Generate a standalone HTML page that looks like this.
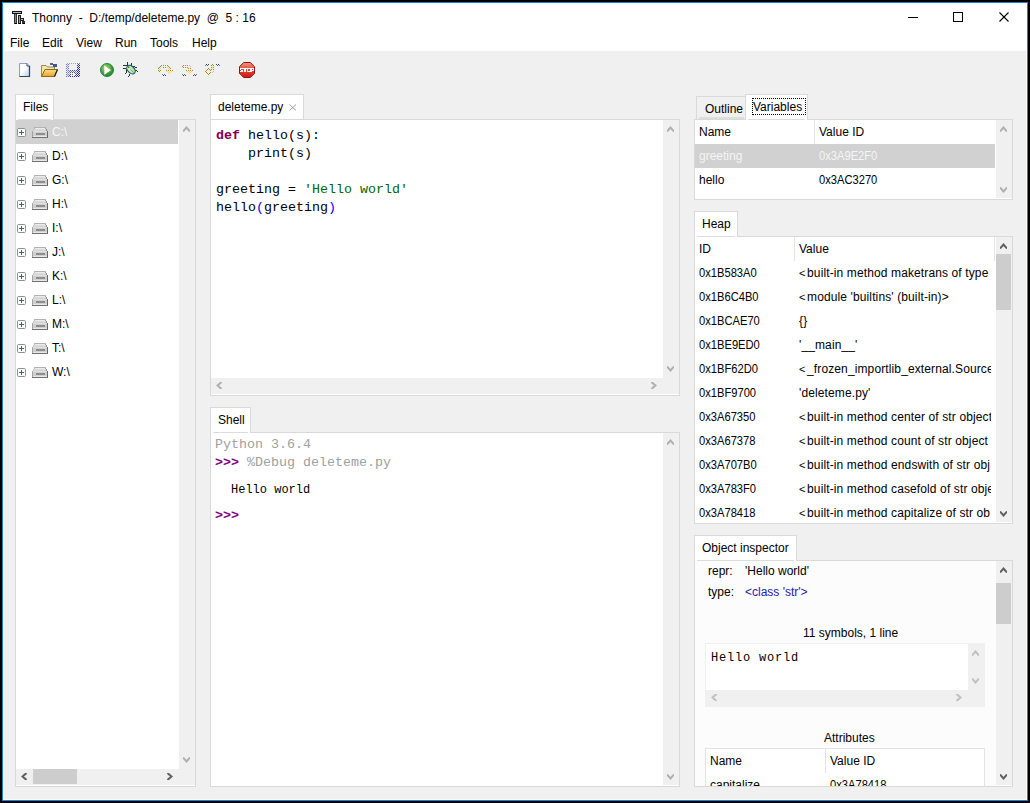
<!DOCTYPE html>
<html><head><meta charset="utf-8">
<style>
html,body{margin:0;padding:0;}
body{width:1030px;height:803px;background:#000;position:relative;overflow:hidden;font-family:"Liberation Sans",sans-serif;}
.a{position:absolute;box-sizing:border-box;display:block;}
.t{position:absolute;white-space:pre;font-size:12px;line-height:16px;color:#000;transform-origin:0 0;}
.m{position:absolute;white-space:pre;font-family:"Liberation Mono",monospace;font-size:13.33px;line-height:18px;color:#000;}
.c{position:absolute;white-space:pre;font-family:"Liberation Mono",monospace;font-size:12px;line-height:16px;color:#000;}
</style></head><body>

<div class="a" style="left:2px;top:2px;width:1026px;height:799px;border:1px solid #1883d7;background:#fcf9f6;"></div>
<div class="a" style="left:3px;top:3px;width:1024px;height:48px;background:#fff;"></div>
<div class="a" style="left:4px;top:51px;width:1022px;height:748px;background:#f0f0f0;"></div>
<div class="t" style="left:32px;top:10px;">Thonny  -  D:/temp/deleteme.py  @  5 : 16</div>
<div class="a" style="left:908px;top:17px;width:10px;height:1px;background:#000;"></div>
<div class="a" style="left:953px;top:12px;width:10px;height:10px;border:1px solid #000;background:transparent;"></div>
<svg class="a" style="left:998px;top:11px" width="12" height="12"><path d="M1.5 1.5 L10.5 10.5 M10.5 1.5 L1.5 10.5" stroke="#000" stroke-width="1.1"/></svg>
<div class="t" style="left:10px;top:35px;">File</div>
<div class="t" style="left:42px;top:35px;">Edit</div>
<div class="t" style="left:76px;top:35px;">View</div>
<div class="t" style="left:115px;top:35px;">Run</div>
<div class="t" style="left:150px;top:35px;">Tools</div>
<div class="t" style="left:192px;top:35px;">Help</div>
<div class="a" style="left:15px;top:94px;width:39px;height:26px;border:1px solid #d9d9d9;background:#fff;"></div>
<div class="t" style="left:23px;top:99px;">Files</div>
<div class="a" style="left:15px;top:119px;width:181px;height:668px;border:1px solid #d9d9d9;background:#fff;"></div>
<div class="a" style="left:16px;top:120px;width:37px;height:1px;background:#fff;"></div>
<div class="a" style="left:16px;top:120px;width:162px;height:24px;background:#d1d1d1;"></div>
<div class="a" style="left:16px;top:119px;width:2px;height:1px;background:#fff;"></div>
<div class="a" style="left:18px;top:119px;width:33px;height:1px;background:#dcdcdc;"></div>
<div class="a" style="left:51px;top:119px;width:2px;height:1px;background:#fff;"></div>
<svg class="a" style="left:17px;top:128px" width="9" height="9"><rect x="0.5" y="0.5" width="8" height="8" rx="1" fill="#fff" stroke="#8e8f8f"/><path d="M2 4.5H7M4.5 2V7" stroke="#3e5c9a" stroke-width="1"/></svg>
<svg class="a" style="left:32px;top:127px" width="16" height="11"><g shape-rendering="crispEdges"><rect x="2" y="0" width="12" height="1" fill="#b4b4b4"/><rect x="2" y="1" width="1" height="1" fill="#b4b4b4"/><rect x="3" y="1" width="10" height="1" fill="#ececec"/><rect x="13" y="1" width="1" height="1" fill="#a0a0a0"/><rect x="1" y="2" width="1" height="1" fill="#c0c0c0"/><rect x="2" y="2" width="12" height="1" fill="#dcdcdc"/><rect x="14" y="2" width="1" height="1" fill="#909090"/><rect x="1" y="3" width="1" height="1" fill="#c8c8c8"/><rect x="2" y="3" width="12" height="1" fill="#d4d4d4"/><rect x="14" y="3" width="1" height="1" fill="#888888"/><rect x="0" y="4" width="1" height="1" fill="#a8a8a8"/><rect x="1" y="4" width="14" height="1" fill="#e0e0e0"/><rect x="15" y="4" width="1" height="1" fill="#707070"/><rect x="0" y="5" width="1" height="1" fill="#a0a0a0"/><rect x="1" y="5" width="14" height="1" fill="#d0d0d0"/><rect x="15" y="5" width="1" height="1" fill="#686868"/><rect x="0" y="6" width="1" height="1" fill="#a0a0a0"/><rect x="1" y="6" width="3" height="1" fill="#d0d0d0"/><rect x="4" y="6" width="9" height="1" fill="#8e8e8e"/><rect x="13" y="6" width="2" height="1" fill="#d0d0d0"/><rect x="15" y="6" width="1" height="1" fill="#686868"/><rect x="0" y="7" width="1" height="1" fill="#a0a0a0"/><rect x="1" y="7" width="3" height="1" fill="#d0d0d0"/><rect x="4" y="7" width="9" height="1" fill="#8e8e8e"/><rect x="13" y="7" width="2" height="1" fill="#d0d0d0"/><rect x="15" y="7" width="1" height="1" fill="#686868"/><rect x="0" y="8" width="1" height="1" fill="#a0a0a0"/><rect x="1" y="8" width="14" height="1" fill="#d0d0d0"/><rect x="15" y="8" width="1" height="1" fill="#686868"/><rect x="0" y="9" width="1" height="1" fill="#a0a0a0"/><rect x="1" y="9" width="14" height="1" fill="#e8e8e8"/><rect x="15" y="9" width="1" height="1" fill="#606060"/><rect x="0" y="10" width="16" height="1" fill="#707070"/></g></svg>
<div class="t" style="left:52px;top:124px;color:#f5f5f5;">C:\</div>
<svg class="a" style="left:17px;top:152px" width="9" height="9"><rect x="0.5" y="0.5" width="8" height="8" rx="1" fill="#fff" stroke="#8e8f8f"/><path d="M2 4.5H7M4.5 2V7" stroke="#3e5c9a" stroke-width="1"/></svg>
<svg class="a" style="left:32px;top:151px" width="16" height="11"><g shape-rendering="crispEdges"><rect x="2" y="0" width="12" height="1" fill="#b4b4b4"/><rect x="2" y="1" width="1" height="1" fill="#b4b4b4"/><rect x="3" y="1" width="10" height="1" fill="#ececec"/><rect x="13" y="1" width="1" height="1" fill="#a0a0a0"/><rect x="1" y="2" width="1" height="1" fill="#c0c0c0"/><rect x="2" y="2" width="12" height="1" fill="#dcdcdc"/><rect x="14" y="2" width="1" height="1" fill="#909090"/><rect x="1" y="3" width="1" height="1" fill="#c8c8c8"/><rect x="2" y="3" width="12" height="1" fill="#d4d4d4"/><rect x="14" y="3" width="1" height="1" fill="#888888"/><rect x="0" y="4" width="1" height="1" fill="#a8a8a8"/><rect x="1" y="4" width="14" height="1" fill="#e0e0e0"/><rect x="15" y="4" width="1" height="1" fill="#707070"/><rect x="0" y="5" width="1" height="1" fill="#a0a0a0"/><rect x="1" y="5" width="14" height="1" fill="#d0d0d0"/><rect x="15" y="5" width="1" height="1" fill="#686868"/><rect x="0" y="6" width="1" height="1" fill="#a0a0a0"/><rect x="1" y="6" width="3" height="1" fill="#d0d0d0"/><rect x="4" y="6" width="9" height="1" fill="#8e8e8e"/><rect x="13" y="6" width="2" height="1" fill="#d0d0d0"/><rect x="15" y="6" width="1" height="1" fill="#686868"/><rect x="0" y="7" width="1" height="1" fill="#a0a0a0"/><rect x="1" y="7" width="3" height="1" fill="#d0d0d0"/><rect x="4" y="7" width="9" height="1" fill="#8e8e8e"/><rect x="13" y="7" width="2" height="1" fill="#d0d0d0"/><rect x="15" y="7" width="1" height="1" fill="#686868"/><rect x="0" y="8" width="1" height="1" fill="#a0a0a0"/><rect x="1" y="8" width="14" height="1" fill="#d0d0d0"/><rect x="15" y="8" width="1" height="1" fill="#686868"/><rect x="0" y="9" width="1" height="1" fill="#a0a0a0"/><rect x="1" y="9" width="14" height="1" fill="#e8e8e8"/><rect x="15" y="9" width="1" height="1" fill="#606060"/><rect x="0" y="10" width="16" height="1" fill="#707070"/></g></svg>
<div class="t" style="left:52px;top:148px;">D:\</div>
<svg class="a" style="left:17px;top:176px" width="9" height="9"><rect x="0.5" y="0.5" width="8" height="8" rx="1" fill="#fff" stroke="#8e8f8f"/><path d="M2 4.5H7M4.5 2V7" stroke="#3e5c9a" stroke-width="1"/></svg>
<svg class="a" style="left:32px;top:175px" width="16" height="11"><g shape-rendering="crispEdges"><rect x="2" y="0" width="12" height="1" fill="#b4b4b4"/><rect x="2" y="1" width="1" height="1" fill="#b4b4b4"/><rect x="3" y="1" width="10" height="1" fill="#ececec"/><rect x="13" y="1" width="1" height="1" fill="#a0a0a0"/><rect x="1" y="2" width="1" height="1" fill="#c0c0c0"/><rect x="2" y="2" width="12" height="1" fill="#dcdcdc"/><rect x="14" y="2" width="1" height="1" fill="#909090"/><rect x="1" y="3" width="1" height="1" fill="#c8c8c8"/><rect x="2" y="3" width="12" height="1" fill="#d4d4d4"/><rect x="14" y="3" width="1" height="1" fill="#888888"/><rect x="0" y="4" width="1" height="1" fill="#a8a8a8"/><rect x="1" y="4" width="14" height="1" fill="#e0e0e0"/><rect x="15" y="4" width="1" height="1" fill="#707070"/><rect x="0" y="5" width="1" height="1" fill="#a0a0a0"/><rect x="1" y="5" width="14" height="1" fill="#d0d0d0"/><rect x="15" y="5" width="1" height="1" fill="#686868"/><rect x="0" y="6" width="1" height="1" fill="#a0a0a0"/><rect x="1" y="6" width="3" height="1" fill="#d0d0d0"/><rect x="4" y="6" width="9" height="1" fill="#8e8e8e"/><rect x="13" y="6" width="2" height="1" fill="#d0d0d0"/><rect x="15" y="6" width="1" height="1" fill="#686868"/><rect x="0" y="7" width="1" height="1" fill="#a0a0a0"/><rect x="1" y="7" width="3" height="1" fill="#d0d0d0"/><rect x="4" y="7" width="9" height="1" fill="#8e8e8e"/><rect x="13" y="7" width="2" height="1" fill="#d0d0d0"/><rect x="15" y="7" width="1" height="1" fill="#686868"/><rect x="0" y="8" width="1" height="1" fill="#a0a0a0"/><rect x="1" y="8" width="14" height="1" fill="#d0d0d0"/><rect x="15" y="8" width="1" height="1" fill="#686868"/><rect x="0" y="9" width="1" height="1" fill="#a0a0a0"/><rect x="1" y="9" width="14" height="1" fill="#e8e8e8"/><rect x="15" y="9" width="1" height="1" fill="#606060"/><rect x="0" y="10" width="16" height="1" fill="#707070"/></g></svg>
<div class="t" style="left:52px;top:172px;">G:\</div>
<svg class="a" style="left:17px;top:200px" width="9" height="9"><rect x="0.5" y="0.5" width="8" height="8" rx="1" fill="#fff" stroke="#8e8f8f"/><path d="M2 4.5H7M4.5 2V7" stroke="#3e5c9a" stroke-width="1"/></svg>
<svg class="a" style="left:32px;top:199px" width="16" height="11"><g shape-rendering="crispEdges"><rect x="2" y="0" width="12" height="1" fill="#b4b4b4"/><rect x="2" y="1" width="1" height="1" fill="#b4b4b4"/><rect x="3" y="1" width="10" height="1" fill="#ececec"/><rect x="13" y="1" width="1" height="1" fill="#a0a0a0"/><rect x="1" y="2" width="1" height="1" fill="#c0c0c0"/><rect x="2" y="2" width="12" height="1" fill="#dcdcdc"/><rect x="14" y="2" width="1" height="1" fill="#909090"/><rect x="1" y="3" width="1" height="1" fill="#c8c8c8"/><rect x="2" y="3" width="12" height="1" fill="#d4d4d4"/><rect x="14" y="3" width="1" height="1" fill="#888888"/><rect x="0" y="4" width="1" height="1" fill="#a8a8a8"/><rect x="1" y="4" width="14" height="1" fill="#e0e0e0"/><rect x="15" y="4" width="1" height="1" fill="#707070"/><rect x="0" y="5" width="1" height="1" fill="#a0a0a0"/><rect x="1" y="5" width="14" height="1" fill="#d0d0d0"/><rect x="15" y="5" width="1" height="1" fill="#686868"/><rect x="0" y="6" width="1" height="1" fill="#a0a0a0"/><rect x="1" y="6" width="3" height="1" fill="#d0d0d0"/><rect x="4" y="6" width="9" height="1" fill="#8e8e8e"/><rect x="13" y="6" width="2" height="1" fill="#d0d0d0"/><rect x="15" y="6" width="1" height="1" fill="#686868"/><rect x="0" y="7" width="1" height="1" fill="#a0a0a0"/><rect x="1" y="7" width="3" height="1" fill="#d0d0d0"/><rect x="4" y="7" width="9" height="1" fill="#8e8e8e"/><rect x="13" y="7" width="2" height="1" fill="#d0d0d0"/><rect x="15" y="7" width="1" height="1" fill="#686868"/><rect x="0" y="8" width="1" height="1" fill="#a0a0a0"/><rect x="1" y="8" width="14" height="1" fill="#d0d0d0"/><rect x="15" y="8" width="1" height="1" fill="#686868"/><rect x="0" y="9" width="1" height="1" fill="#a0a0a0"/><rect x="1" y="9" width="14" height="1" fill="#e8e8e8"/><rect x="15" y="9" width="1" height="1" fill="#606060"/><rect x="0" y="10" width="16" height="1" fill="#707070"/></g></svg>
<div class="t" style="left:52px;top:196px;">H:\</div>
<svg class="a" style="left:17px;top:224px" width="9" height="9"><rect x="0.5" y="0.5" width="8" height="8" rx="1" fill="#fff" stroke="#8e8f8f"/><path d="M2 4.5H7M4.5 2V7" stroke="#3e5c9a" stroke-width="1"/></svg>
<svg class="a" style="left:32px;top:223px" width="16" height="11"><g shape-rendering="crispEdges"><rect x="2" y="0" width="12" height="1" fill="#b4b4b4"/><rect x="2" y="1" width="1" height="1" fill="#b4b4b4"/><rect x="3" y="1" width="10" height="1" fill="#ececec"/><rect x="13" y="1" width="1" height="1" fill="#a0a0a0"/><rect x="1" y="2" width="1" height="1" fill="#c0c0c0"/><rect x="2" y="2" width="12" height="1" fill="#dcdcdc"/><rect x="14" y="2" width="1" height="1" fill="#909090"/><rect x="1" y="3" width="1" height="1" fill="#c8c8c8"/><rect x="2" y="3" width="12" height="1" fill="#d4d4d4"/><rect x="14" y="3" width="1" height="1" fill="#888888"/><rect x="0" y="4" width="1" height="1" fill="#a8a8a8"/><rect x="1" y="4" width="14" height="1" fill="#e0e0e0"/><rect x="15" y="4" width="1" height="1" fill="#707070"/><rect x="0" y="5" width="1" height="1" fill="#a0a0a0"/><rect x="1" y="5" width="14" height="1" fill="#d0d0d0"/><rect x="15" y="5" width="1" height="1" fill="#686868"/><rect x="0" y="6" width="1" height="1" fill="#a0a0a0"/><rect x="1" y="6" width="3" height="1" fill="#d0d0d0"/><rect x="4" y="6" width="9" height="1" fill="#8e8e8e"/><rect x="13" y="6" width="2" height="1" fill="#d0d0d0"/><rect x="15" y="6" width="1" height="1" fill="#686868"/><rect x="0" y="7" width="1" height="1" fill="#a0a0a0"/><rect x="1" y="7" width="3" height="1" fill="#d0d0d0"/><rect x="4" y="7" width="9" height="1" fill="#8e8e8e"/><rect x="13" y="7" width="2" height="1" fill="#d0d0d0"/><rect x="15" y="7" width="1" height="1" fill="#686868"/><rect x="0" y="8" width="1" height="1" fill="#a0a0a0"/><rect x="1" y="8" width="14" height="1" fill="#d0d0d0"/><rect x="15" y="8" width="1" height="1" fill="#686868"/><rect x="0" y="9" width="1" height="1" fill="#a0a0a0"/><rect x="1" y="9" width="14" height="1" fill="#e8e8e8"/><rect x="15" y="9" width="1" height="1" fill="#606060"/><rect x="0" y="10" width="16" height="1" fill="#707070"/></g></svg>
<div class="t" style="left:52px;top:220px;">I:\</div>
<svg class="a" style="left:17px;top:248px" width="9" height="9"><rect x="0.5" y="0.5" width="8" height="8" rx="1" fill="#fff" stroke="#8e8f8f"/><path d="M2 4.5H7M4.5 2V7" stroke="#3e5c9a" stroke-width="1"/></svg>
<svg class="a" style="left:32px;top:247px" width="16" height="11"><g shape-rendering="crispEdges"><rect x="2" y="0" width="12" height="1" fill="#b4b4b4"/><rect x="2" y="1" width="1" height="1" fill="#b4b4b4"/><rect x="3" y="1" width="10" height="1" fill="#ececec"/><rect x="13" y="1" width="1" height="1" fill="#a0a0a0"/><rect x="1" y="2" width="1" height="1" fill="#c0c0c0"/><rect x="2" y="2" width="12" height="1" fill="#dcdcdc"/><rect x="14" y="2" width="1" height="1" fill="#909090"/><rect x="1" y="3" width="1" height="1" fill="#c8c8c8"/><rect x="2" y="3" width="12" height="1" fill="#d4d4d4"/><rect x="14" y="3" width="1" height="1" fill="#888888"/><rect x="0" y="4" width="1" height="1" fill="#a8a8a8"/><rect x="1" y="4" width="14" height="1" fill="#e0e0e0"/><rect x="15" y="4" width="1" height="1" fill="#707070"/><rect x="0" y="5" width="1" height="1" fill="#a0a0a0"/><rect x="1" y="5" width="14" height="1" fill="#d0d0d0"/><rect x="15" y="5" width="1" height="1" fill="#686868"/><rect x="0" y="6" width="1" height="1" fill="#a0a0a0"/><rect x="1" y="6" width="3" height="1" fill="#d0d0d0"/><rect x="4" y="6" width="9" height="1" fill="#8e8e8e"/><rect x="13" y="6" width="2" height="1" fill="#d0d0d0"/><rect x="15" y="6" width="1" height="1" fill="#686868"/><rect x="0" y="7" width="1" height="1" fill="#a0a0a0"/><rect x="1" y="7" width="3" height="1" fill="#d0d0d0"/><rect x="4" y="7" width="9" height="1" fill="#8e8e8e"/><rect x="13" y="7" width="2" height="1" fill="#d0d0d0"/><rect x="15" y="7" width="1" height="1" fill="#686868"/><rect x="0" y="8" width="1" height="1" fill="#a0a0a0"/><rect x="1" y="8" width="14" height="1" fill="#d0d0d0"/><rect x="15" y="8" width="1" height="1" fill="#686868"/><rect x="0" y="9" width="1" height="1" fill="#a0a0a0"/><rect x="1" y="9" width="14" height="1" fill="#e8e8e8"/><rect x="15" y="9" width="1" height="1" fill="#606060"/><rect x="0" y="10" width="16" height="1" fill="#707070"/></g></svg>
<div class="t" style="left:52px;top:244px;">J:\</div>
<svg class="a" style="left:17px;top:272px" width="9" height="9"><rect x="0.5" y="0.5" width="8" height="8" rx="1" fill="#fff" stroke="#8e8f8f"/><path d="M2 4.5H7M4.5 2V7" stroke="#3e5c9a" stroke-width="1"/></svg>
<svg class="a" style="left:32px;top:271px" width="16" height="11"><g shape-rendering="crispEdges"><rect x="2" y="0" width="12" height="1" fill="#b4b4b4"/><rect x="2" y="1" width="1" height="1" fill="#b4b4b4"/><rect x="3" y="1" width="10" height="1" fill="#ececec"/><rect x="13" y="1" width="1" height="1" fill="#a0a0a0"/><rect x="1" y="2" width="1" height="1" fill="#c0c0c0"/><rect x="2" y="2" width="12" height="1" fill="#dcdcdc"/><rect x="14" y="2" width="1" height="1" fill="#909090"/><rect x="1" y="3" width="1" height="1" fill="#c8c8c8"/><rect x="2" y="3" width="12" height="1" fill="#d4d4d4"/><rect x="14" y="3" width="1" height="1" fill="#888888"/><rect x="0" y="4" width="1" height="1" fill="#a8a8a8"/><rect x="1" y="4" width="14" height="1" fill="#e0e0e0"/><rect x="15" y="4" width="1" height="1" fill="#707070"/><rect x="0" y="5" width="1" height="1" fill="#a0a0a0"/><rect x="1" y="5" width="14" height="1" fill="#d0d0d0"/><rect x="15" y="5" width="1" height="1" fill="#686868"/><rect x="0" y="6" width="1" height="1" fill="#a0a0a0"/><rect x="1" y="6" width="3" height="1" fill="#d0d0d0"/><rect x="4" y="6" width="9" height="1" fill="#8e8e8e"/><rect x="13" y="6" width="2" height="1" fill="#d0d0d0"/><rect x="15" y="6" width="1" height="1" fill="#686868"/><rect x="0" y="7" width="1" height="1" fill="#a0a0a0"/><rect x="1" y="7" width="3" height="1" fill="#d0d0d0"/><rect x="4" y="7" width="9" height="1" fill="#8e8e8e"/><rect x="13" y="7" width="2" height="1" fill="#d0d0d0"/><rect x="15" y="7" width="1" height="1" fill="#686868"/><rect x="0" y="8" width="1" height="1" fill="#a0a0a0"/><rect x="1" y="8" width="14" height="1" fill="#d0d0d0"/><rect x="15" y="8" width="1" height="1" fill="#686868"/><rect x="0" y="9" width="1" height="1" fill="#a0a0a0"/><rect x="1" y="9" width="14" height="1" fill="#e8e8e8"/><rect x="15" y="9" width="1" height="1" fill="#606060"/><rect x="0" y="10" width="16" height="1" fill="#707070"/></g></svg>
<div class="t" style="left:52px;top:268px;">K:\</div>
<svg class="a" style="left:17px;top:296px" width="9" height="9"><rect x="0.5" y="0.5" width="8" height="8" rx="1" fill="#fff" stroke="#8e8f8f"/><path d="M2 4.5H7M4.5 2V7" stroke="#3e5c9a" stroke-width="1"/></svg>
<svg class="a" style="left:32px;top:295px" width="16" height="11"><g shape-rendering="crispEdges"><rect x="2" y="0" width="12" height="1" fill="#b4b4b4"/><rect x="2" y="1" width="1" height="1" fill="#b4b4b4"/><rect x="3" y="1" width="10" height="1" fill="#ececec"/><rect x="13" y="1" width="1" height="1" fill="#a0a0a0"/><rect x="1" y="2" width="1" height="1" fill="#c0c0c0"/><rect x="2" y="2" width="12" height="1" fill="#dcdcdc"/><rect x="14" y="2" width="1" height="1" fill="#909090"/><rect x="1" y="3" width="1" height="1" fill="#c8c8c8"/><rect x="2" y="3" width="12" height="1" fill="#d4d4d4"/><rect x="14" y="3" width="1" height="1" fill="#888888"/><rect x="0" y="4" width="1" height="1" fill="#a8a8a8"/><rect x="1" y="4" width="14" height="1" fill="#e0e0e0"/><rect x="15" y="4" width="1" height="1" fill="#707070"/><rect x="0" y="5" width="1" height="1" fill="#a0a0a0"/><rect x="1" y="5" width="14" height="1" fill="#d0d0d0"/><rect x="15" y="5" width="1" height="1" fill="#686868"/><rect x="0" y="6" width="1" height="1" fill="#a0a0a0"/><rect x="1" y="6" width="3" height="1" fill="#d0d0d0"/><rect x="4" y="6" width="9" height="1" fill="#8e8e8e"/><rect x="13" y="6" width="2" height="1" fill="#d0d0d0"/><rect x="15" y="6" width="1" height="1" fill="#686868"/><rect x="0" y="7" width="1" height="1" fill="#a0a0a0"/><rect x="1" y="7" width="3" height="1" fill="#d0d0d0"/><rect x="4" y="7" width="9" height="1" fill="#8e8e8e"/><rect x="13" y="7" width="2" height="1" fill="#d0d0d0"/><rect x="15" y="7" width="1" height="1" fill="#686868"/><rect x="0" y="8" width="1" height="1" fill="#a0a0a0"/><rect x="1" y="8" width="14" height="1" fill="#d0d0d0"/><rect x="15" y="8" width="1" height="1" fill="#686868"/><rect x="0" y="9" width="1" height="1" fill="#a0a0a0"/><rect x="1" y="9" width="14" height="1" fill="#e8e8e8"/><rect x="15" y="9" width="1" height="1" fill="#606060"/><rect x="0" y="10" width="16" height="1" fill="#707070"/></g></svg>
<div class="t" style="left:52px;top:292px;">L:\</div>
<svg class="a" style="left:17px;top:320px" width="9" height="9"><rect x="0.5" y="0.5" width="8" height="8" rx="1" fill="#fff" stroke="#8e8f8f"/><path d="M2 4.5H7M4.5 2V7" stroke="#3e5c9a" stroke-width="1"/></svg>
<svg class="a" style="left:32px;top:319px" width="16" height="11"><g shape-rendering="crispEdges"><rect x="2" y="0" width="12" height="1" fill="#b4b4b4"/><rect x="2" y="1" width="1" height="1" fill="#b4b4b4"/><rect x="3" y="1" width="10" height="1" fill="#ececec"/><rect x="13" y="1" width="1" height="1" fill="#a0a0a0"/><rect x="1" y="2" width="1" height="1" fill="#c0c0c0"/><rect x="2" y="2" width="12" height="1" fill="#dcdcdc"/><rect x="14" y="2" width="1" height="1" fill="#909090"/><rect x="1" y="3" width="1" height="1" fill="#c8c8c8"/><rect x="2" y="3" width="12" height="1" fill="#d4d4d4"/><rect x="14" y="3" width="1" height="1" fill="#888888"/><rect x="0" y="4" width="1" height="1" fill="#a8a8a8"/><rect x="1" y="4" width="14" height="1" fill="#e0e0e0"/><rect x="15" y="4" width="1" height="1" fill="#707070"/><rect x="0" y="5" width="1" height="1" fill="#a0a0a0"/><rect x="1" y="5" width="14" height="1" fill="#d0d0d0"/><rect x="15" y="5" width="1" height="1" fill="#686868"/><rect x="0" y="6" width="1" height="1" fill="#a0a0a0"/><rect x="1" y="6" width="3" height="1" fill="#d0d0d0"/><rect x="4" y="6" width="9" height="1" fill="#8e8e8e"/><rect x="13" y="6" width="2" height="1" fill="#d0d0d0"/><rect x="15" y="6" width="1" height="1" fill="#686868"/><rect x="0" y="7" width="1" height="1" fill="#a0a0a0"/><rect x="1" y="7" width="3" height="1" fill="#d0d0d0"/><rect x="4" y="7" width="9" height="1" fill="#8e8e8e"/><rect x="13" y="7" width="2" height="1" fill="#d0d0d0"/><rect x="15" y="7" width="1" height="1" fill="#686868"/><rect x="0" y="8" width="1" height="1" fill="#a0a0a0"/><rect x="1" y="8" width="14" height="1" fill="#d0d0d0"/><rect x="15" y="8" width="1" height="1" fill="#686868"/><rect x="0" y="9" width="1" height="1" fill="#a0a0a0"/><rect x="1" y="9" width="14" height="1" fill="#e8e8e8"/><rect x="15" y="9" width="1" height="1" fill="#606060"/><rect x="0" y="10" width="16" height="1" fill="#707070"/></g></svg>
<div class="t" style="left:52px;top:316px;">M:\</div>
<svg class="a" style="left:17px;top:344px" width="9" height="9"><rect x="0.5" y="0.5" width="8" height="8" rx="1" fill="#fff" stroke="#8e8f8f"/><path d="M2 4.5H7M4.5 2V7" stroke="#3e5c9a" stroke-width="1"/></svg>
<svg class="a" style="left:32px;top:343px" width="16" height="11"><g shape-rendering="crispEdges"><rect x="2" y="0" width="12" height="1" fill="#b4b4b4"/><rect x="2" y="1" width="1" height="1" fill="#b4b4b4"/><rect x="3" y="1" width="10" height="1" fill="#ececec"/><rect x="13" y="1" width="1" height="1" fill="#a0a0a0"/><rect x="1" y="2" width="1" height="1" fill="#c0c0c0"/><rect x="2" y="2" width="12" height="1" fill="#dcdcdc"/><rect x="14" y="2" width="1" height="1" fill="#909090"/><rect x="1" y="3" width="1" height="1" fill="#c8c8c8"/><rect x="2" y="3" width="12" height="1" fill="#d4d4d4"/><rect x="14" y="3" width="1" height="1" fill="#888888"/><rect x="0" y="4" width="1" height="1" fill="#a8a8a8"/><rect x="1" y="4" width="14" height="1" fill="#e0e0e0"/><rect x="15" y="4" width="1" height="1" fill="#707070"/><rect x="0" y="5" width="1" height="1" fill="#a0a0a0"/><rect x="1" y="5" width="14" height="1" fill="#d0d0d0"/><rect x="15" y="5" width="1" height="1" fill="#686868"/><rect x="0" y="6" width="1" height="1" fill="#a0a0a0"/><rect x="1" y="6" width="3" height="1" fill="#d0d0d0"/><rect x="4" y="6" width="9" height="1" fill="#8e8e8e"/><rect x="13" y="6" width="2" height="1" fill="#d0d0d0"/><rect x="15" y="6" width="1" height="1" fill="#686868"/><rect x="0" y="7" width="1" height="1" fill="#a0a0a0"/><rect x="1" y="7" width="3" height="1" fill="#d0d0d0"/><rect x="4" y="7" width="9" height="1" fill="#8e8e8e"/><rect x="13" y="7" width="2" height="1" fill="#d0d0d0"/><rect x="15" y="7" width="1" height="1" fill="#686868"/><rect x="0" y="8" width="1" height="1" fill="#a0a0a0"/><rect x="1" y="8" width="14" height="1" fill="#d0d0d0"/><rect x="15" y="8" width="1" height="1" fill="#686868"/><rect x="0" y="9" width="1" height="1" fill="#a0a0a0"/><rect x="1" y="9" width="14" height="1" fill="#e8e8e8"/><rect x="15" y="9" width="1" height="1" fill="#606060"/><rect x="0" y="10" width="16" height="1" fill="#707070"/></g></svg>
<div class="t" style="left:52px;top:340px;">T:\</div>
<svg class="a" style="left:17px;top:368px" width="9" height="9"><rect x="0.5" y="0.5" width="8" height="8" rx="1" fill="#fff" stroke="#8e8f8f"/><path d="M2 4.5H7M4.5 2V7" stroke="#3e5c9a" stroke-width="1"/></svg>
<svg class="a" style="left:32px;top:367px" width="16" height="11"><g shape-rendering="crispEdges"><rect x="2" y="0" width="12" height="1" fill="#b4b4b4"/><rect x="2" y="1" width="1" height="1" fill="#b4b4b4"/><rect x="3" y="1" width="10" height="1" fill="#ececec"/><rect x="13" y="1" width="1" height="1" fill="#a0a0a0"/><rect x="1" y="2" width="1" height="1" fill="#c0c0c0"/><rect x="2" y="2" width="12" height="1" fill="#dcdcdc"/><rect x="14" y="2" width="1" height="1" fill="#909090"/><rect x="1" y="3" width="1" height="1" fill="#c8c8c8"/><rect x="2" y="3" width="12" height="1" fill="#d4d4d4"/><rect x="14" y="3" width="1" height="1" fill="#888888"/><rect x="0" y="4" width="1" height="1" fill="#a8a8a8"/><rect x="1" y="4" width="14" height="1" fill="#e0e0e0"/><rect x="15" y="4" width="1" height="1" fill="#707070"/><rect x="0" y="5" width="1" height="1" fill="#a0a0a0"/><rect x="1" y="5" width="14" height="1" fill="#d0d0d0"/><rect x="15" y="5" width="1" height="1" fill="#686868"/><rect x="0" y="6" width="1" height="1" fill="#a0a0a0"/><rect x="1" y="6" width="3" height="1" fill="#d0d0d0"/><rect x="4" y="6" width="9" height="1" fill="#8e8e8e"/><rect x="13" y="6" width="2" height="1" fill="#d0d0d0"/><rect x="15" y="6" width="1" height="1" fill="#686868"/><rect x="0" y="7" width="1" height="1" fill="#a0a0a0"/><rect x="1" y="7" width="3" height="1" fill="#d0d0d0"/><rect x="4" y="7" width="9" height="1" fill="#8e8e8e"/><rect x="13" y="7" width="2" height="1" fill="#d0d0d0"/><rect x="15" y="7" width="1" height="1" fill="#686868"/><rect x="0" y="8" width="1" height="1" fill="#a0a0a0"/><rect x="1" y="8" width="14" height="1" fill="#d0d0d0"/><rect x="15" y="8" width="1" height="1" fill="#686868"/><rect x="0" y="9" width="1" height="1" fill="#a0a0a0"/><rect x="1" y="9" width="14" height="1" fill="#e8e8e8"/><rect x="15" y="9" width="1" height="1" fill="#606060"/><rect x="0" y="10" width="16" height="1" fill="#707070"/></g></svg>
<div class="t" style="left:52px;top:364px;">W:\</div>
<div class="a" style="left:179px;top:120px;width:16px;height:649px;background:#f0f0f0;"></div>
<svg class="a" style="left:183px;top:126px" width="7" height="6"><polyline points="0,5.5 3.5,1.5 7,5.5" fill="none" stroke="#b0b0b0" stroke-width="2"/></svg>
<svg class="a" style="left:183px;top:757px" width="7" height="6"><polyline points="0,0.5 3.5,4.5 7,0.5" fill="none" stroke="#b0b0b0" stroke-width="2"/></svg>
<div class="a" style="left:16px;top:769px;width:163px;height:16px;background:#f0f0f0;"></div>
<div class="a" style="left:179px;top:769px;width:16px;height:16px;background:#f0f0f0;"></div>
<div class="a" style="left:33px;top:769px;width:44px;height:15px;background:#cdcdcd;"></div>
<svg class="a" style="left:21px;top:773px" width="6" height="7"><polyline points="5.5,0 1.5,3.5 5.5,7" fill="none" stroke="#606060" stroke-width="2"/></svg>
<svg class="a" style="left:167px;top:773px" width="6" height="7"><polyline points="0.5,0 4.5,3.5 0.5,7" fill="none" stroke="#606060" stroke-width="2"/></svg>
<div class="a" style="left:210px;top:94px;width:94px;height:26px;border:1px solid #d9d9d9;background:#fff;"></div>
<div class="t" style="left:218px;top:99px;">deleteme.py</div>
<svg class="a" style="left:289px;top:104px" width="8" height="7"><path d="M0.5 0.5L7 6.5M7 0.5L0.5 6.5" stroke="#a0a0a0" stroke-width="1"/></svg>
<div class="a" style="left:210px;top:119px;width:470px;height:277px;border:1px solid #d9d9d9;background:#fff;"></div>
<div class="a" style="left:663px;top:120px;width:16px;height:258px;background:#f0f0f0;"></div>
<svg class="a" style="left:667px;top:126px" width="7" height="6"><polyline points="0,5.5 3.5,1.5 7,5.5" fill="none" stroke="#b0b0b0" stroke-width="2"/></svg>
<svg class="a" style="left:667px;top:366px" width="7" height="6"><polyline points="0,0.5 3.5,4.5 7,0.5" fill="none" stroke="#b0b0b0" stroke-width="2"/></svg>
<div class="a" style="left:211px;top:378px;width:468px;height:16px;background:#f0f0f0;"></div>
<svg class="a" style="left:216px;top:382px" width="6" height="7"><polyline points="5.5,0 1.5,3.5 5.5,7" fill="none" stroke="#b0b0b0" stroke-width="2"/></svg>
<svg class="a" style="left:651px;top:382px" width="6" height="7"><polyline points="0.5,0 4.5,3.5 0.5,7" fill="none" stroke="#b0b0b0" stroke-width="2"/></svg>
<div class="m" style="left:216px;top:127px;line-height:18px"><span style="color:#7f0055;font-weight:bold">def</span> hello(s):
    print(s)

greeting = <span style="color:#006800">'Hello world'</span>
hello<span style="color:#0000ff">(</span>greeting<span style="color:#0000ff">)</span></div>
<div class="a" style="left:210px;top:407px;width:41px;height:26px;border:1px solid #d9d9d9;background:#fff;"></div>
<div class="t" style="left:218px;top:412px;">Shell</div>
<div class="a" style="left:210px;top:432px;width:470px;height:355px;border:1px solid #d9d9d9;background:#fff;"></div>
<div class="a" style="left:211px;top:432px;width:2px;height:1px;background:#fff;"></div>
<div class="a" style="left:213px;top:432px;width:35px;height:1px;background:#dcdcdc;"></div>
<div class="a" style="left:248px;top:432px;width:2px;height:1px;background:#fff;"></div>
<div class="a" style="left:663px;top:433px;width:16px;height:352px;background:#f0f0f0;"></div>
<svg class="a" style="left:667px;top:439px" width="7" height="6"><polyline points="0,5.5 3.5,1.5 7,5.5" fill="none" stroke="#b0b0b0" stroke-width="2"/></svg>
<svg class="a" style="left:667px;top:774px" width="7" height="6"><polyline points="0,0.5 3.5,4.5 7,0.5" fill="none" stroke="#b0b0b0" stroke-width="2"/></svg>
<div class="m" style="left:215px;top:436px;line-height:18px;color:#a0a0a0">Python 3.6.4
<span style="color:#800080;font-weight:bold">&gt;&gt;&gt;</span> %Debug deleteme.py</div>
<div class="c" style="left:231px;top:482px;">Hello world</div>
<div class="m" style="left:215px;top:507px;color:#800080;font-weight:bold">&gt;&gt;&gt;</div>
<div class="a" style="left:696px;top:96px;width:50px;height:24px;border:1px solid #d9d9d9;background:#f0f0f0;"></div>
<div class="a" style="left:745px;top:94px;width:63px;height:26px;border:1px solid #d9d9d9;background:#fff;"></div>
<div class="a" style="left:699px;top:117px;width:45px;height:2px;background:#dedede;"></div>
<div class="t" style="left:705px;top:101px;">Outline</div>
<div class="t" style="left:753px;top:99px;">Variables</div>
<div class="a" style="left:752px;top:98px;width:54px;height:17px;border:1px dotted #000"></div>
<div class="a" style="left:694px;top:119px;width:319px;height:81px;border:1px solid #d9d9d9;background:#fff;"></div>
<div class="a" style="left:746px;top:119px;width:2px;height:1px;background:#fff;"></div>
<div class="a" style="left:748px;top:119px;width:57px;height:1px;background:#dcdcdc;"></div>
<div class="a" style="left:805px;top:119px;width:2px;height:1px;background:#fff;"></div>
<div class="t" style="left:699px;top:124px;">Name</div>
<div class="a" style="left:814px;top:120px;width:1px;height:24px;background:#e5e5e5;"></div>
<div class="t" style="left:819px;top:124px;">Value ID</div>
<div class="a" style="left:695px;top:144px;width:300px;height:24px;background:#d1d1d1;"></div>
<div class="t" style="left:699px;top:148px;color:#f5f5f5;">greeting</div>
<div class="t" style="left:819px;top:148px;color:#f5f5f5;transform:scaleX(0.93);">0x3A9E2F0</div>
<div class="t" style="left:699px;top:172px;">hello</div>
<div class="t" style="left:819px;top:172px;transform:scaleX(0.93);">0x3AC3270</div>
<div class="a" style="left:996px;top:120px;width:16px;height:78px;background:#f0f0f0;"></div>
<svg class="a" style="left:1000px;top:126px" width="7" height="6"><polyline points="0,5.5 3.5,1.5 7,5.5" fill="none" stroke="#b0b0b0" stroke-width="2"/></svg>
<svg class="a" style="left:1000px;top:187px" width="7" height="6"><polyline points="0,0.5 3.5,4.5 7,0.5" fill="none" stroke="#b0b0b0" stroke-width="2"/></svg>
<div class="a" style="left:694px;top:211px;width:44px;height:26px;border:1px solid #d9d9d9;background:#fff;"></div>
<div class="t" style="left:702px;top:216px;">Heap</div>
<div class="a" style="left:694px;top:236px;width:319px;height:288px;border:1px solid #d9d9d9;background:#fff;"></div>
<div class="a" style="left:695px;top:236px;width:2px;height:1px;background:#fff;"></div>
<div class="a" style="left:697px;top:236px;width:38px;height:1px;background:#dcdcdc;"></div>
<div class="a" style="left:735px;top:236px;width:2px;height:1px;background:#fff;"></div>
<div class="t" style="left:699px;top:241px;">ID</div>
<div class="a" style="left:794px;top:237px;width:1px;height:24px;background:#e5e5e5;"></div>
<div class="a" style="left:994px;top:237px;width:1px;height:24px;background:#e5e5e5;"></div>
<div class="t" style="left:799px;top:241px;">Value</div>
<div class="a" style="left:695px;top:261px;width:300px;height:262px;overflow:hidden">
<div class="t" style="left:4px;top:4px;transform:scaleX(0.93)">0x1B583A0</div>
<div class="t" style="left:104px;top:4px;width:192px;overflow:hidden;letter-spacing:0.12px"><span style="font-size:11px;margin-right:1.5px">&lt;</span>built-in method maketrans of type</div>
<div class="t" style="left:4px;top:28px;transform:scaleX(0.93)">0x1B6C4B0</div>
<div class="t" style="left:104px;top:28px;width:192px;overflow:hidden;letter-spacing:0.12px"><span style="font-size:11px;margin-right:1.5px">&lt;</span>module &#x27;builtins&#x27; (built-in)&gt;</div>
<div class="t" style="left:4px;top:52px;transform:scaleX(0.93)">0x1BCAE70</div>
<div class="t" style="left:104px;top:52px;width:192px;overflow:hidden;letter-spacing:0.12px">{}</div>
<div class="t" style="left:4px;top:76px;transform:scaleX(0.93)">0x1BE9ED0</div>
<div class="t" style="left:104px;top:76px;width:192px;overflow:hidden;letter-spacing:0.12px">&#x27;__main__&#x27;</div>
<div class="t" style="left:4px;top:100px;transform:scaleX(0.93)">0x1BF62D0</div>
<div class="t" style="left:104px;top:100px;width:192px;overflow:hidden;letter-spacing:0.12px"><span style="font-size:11px;margin-right:1.5px">&lt;</span>_frozen_importlib_external.SourceF</div>
<div class="t" style="left:4px;top:124px;transform:scaleX(0.93)">0x1BF9700</div>
<div class="t" style="left:104px;top:124px;width:192px;overflow:hidden;letter-spacing:0.12px">&#x27;deleteme.py&#x27;</div>
<div class="t" style="left:4px;top:148px;transform:scaleX(0.93)">0x3A67350</div>
<div class="t" style="left:104px;top:148px;width:192px;overflow:hidden;letter-spacing:0.12px"><span style="font-size:11px;margin-right:1.5px">&lt;</span>built-in method center of str object</div>
<div class="t" style="left:4px;top:172px;transform:scaleX(0.93)">0x3A67378</div>
<div class="t" style="left:104px;top:172px;width:192px;overflow:hidden;letter-spacing:0.12px"><span style="font-size:11px;margin-right:1.5px">&lt;</span>built-in method count of str object</div>
<div class="t" style="left:4px;top:196px;transform:scaleX(0.93)">0x3A707B0</div>
<div class="t" style="left:104px;top:196px;width:192px;overflow:hidden;letter-spacing:0.12px"><span style="font-size:11px;margin-right:1.5px">&lt;</span>built-in method endswith of str obj</div>
<div class="t" style="left:4px;top:220px;transform:scaleX(0.93)">0x3A783F0</div>
<div class="t" style="left:104px;top:220px;width:192px;overflow:hidden;letter-spacing:0.12px"><span style="font-size:11px;margin-right:1.5px">&lt;</span>built-in method casefold of str obje</div>
<div class="t" style="left:4px;top:244px;transform:scaleX(0.93)">0x3A78418</div>
<div class="t" style="left:104px;top:244px;width:192px;overflow:hidden;letter-spacing:0.12px"><span style="font-size:11px;margin-right:1.5px">&lt;</span>built-in method capitalize of str ob</div>
</div>
<div class="a" style="left:996px;top:237px;width:16px;height:285px;background:#f0f0f0;"></div>
<svg class="a" style="left:1000px;top:243px" width="7" height="6"><polyline points="0,5.5 3.5,1.5 7,5.5" fill="none" stroke="#606060" stroke-width="2"/></svg>
<div class="a" style="left:996px;top:254px;width:15px;height:56px;background:#cdcdcd;"></div>
<svg class="a" style="left:1000px;top:511px" width="7" height="6"><polyline points="0,0.5 3.5,4.5 7,0.5" fill="none" stroke="#606060" stroke-width="2"/></svg>
<div class="a" style="left:694px;top:535px;width:103px;height:26px;border:1px solid #d9d9d9;background:#fff;"></div>
<div class="t" style="left:702px;top:540px;">Object inspector</div>
<div class="a" style="left:694px;top:560px;width:319px;height:227px;border:1px solid #d9d9d9;background:#fcfcfc;"></div>
<div class="a" style="left:695px;top:560px;width:2px;height:1px;background:#fff;"></div>
<div class="a" style="left:697px;top:560px;width:97px;height:1px;background:#dcdcdc;"></div>
<div class="a" style="left:794px;top:560px;width:2px;height:1px;background:#fff;"></div>
<div class="t" style="left:708px;top:563px;">repr:</div>
<div class="t" style="left:745px;top:563px;">&#x27;Hello world&#x27;</div>
<div class="t" style="left:708px;top:584px;">type:</div>
<div class="t" style="left:745px;top:584px;color:#2020b0;">&lt;class &#x27;str&#x27;&gt;</div>
<div class="t" style="left:803px;top:625px;">11 symbols, 1 line</div>
<div class="a" style="left:705px;top:643px;width:280px;height:64px;background:#f0f0f0;"></div>
<div class="a" style="left:706px;top:644px;width:262px;height:46px;background:#fff;"></div>
<div class="c" style="left:711px;top:650px;letter-spacing:0.8px;">Hello world</div>
<svg class="a" style="left:972px;top:650px" width="7" height="6"><polyline points="0,5.5 3.5,1.5 7,5.5" fill="none" stroke="#c0c0c0" stroke-width="2"/></svg>
<svg class="a" style="left:972px;top:678px" width="7" height="6"><polyline points="0,0.5 3.5,4.5 7,0.5" fill="none" stroke="#c0c0c0" stroke-width="2"/></svg>
<svg class="a" style="left:711px;top:694px" width="6" height="7"><polyline points="5.5,0 1.5,3.5 5.5,7" fill="none" stroke="#c0c0c0" stroke-width="2"/></svg>
<svg class="a" style="left:956px;top:694px" width="6" height="7"><polyline points="0.5,0 4.5,3.5 0.5,7" fill="none" stroke="#c0c0c0" stroke-width="2"/></svg>
<div class="t" style="left:824px;top:730px;">Attributes</div>
<div class="a" style="left:705px;top:748px;width:280px;height:38px;border:1px solid #e3e3e3;border-bottom:none;background:#fff;overflow:hidden">
<div class="t" style="left:4px;top:4px">Name</div>
<div class="a" style="left:119px;top:0px;width:1px;height:24px;background:#e5e5e5"></div>
<div class="t" style="left:124px;top:4px">Value ID</div>
<div class="t" style="left:4px;top:28px">capitalize</div>
<div class="t" style="left:124px;top:28px;transform:scaleX(0.93)">0x3A78418</div>
</div>
<div class="a" style="left:996px;top:561px;width:16px;height:224px;background:#f0f0f0;"></div>
<svg class="a" style="left:1000px;top:567px" width="7" height="6"><polyline points="0,5.5 3.5,1.5 7,5.5" fill="none" stroke="#606060" stroke-width="2"/></svg>
<div class="a" style="left:996px;top:583px;width:15px;height:41px;background:#cdcdcd;"></div>
<svg class="a" style="left:1000px;top:774px" width="7" height="6"><polyline points="0,0.5 3.5,4.5 7,0.5" fill="none" stroke="#606060" stroke-width="2"/></svg>
<svg class="a" style="left:12px;top:11px" width="13" height="13" shape-rendering="crispEdges"><rect x="0" y="0" width="10" height="3" fill="#111"/><rect x="1" y="1" width="8" height="1" fill="#bbb"/><rect x="2" y="3" width="3" height="10" fill="#333"/><rect x="3" y="3" width="1" height="9" fill="#888"/><rect x="6" y="4" width="3" height="9" fill="#222"/><rect x="7" y="5" width="1" height="7" fill="#999"/><rect x="8" y="7" width="4" height="3" fill="#222"/><rect x="9" y="8" width="2" height="1" fill="#bbb"/><rect x="10" y="10" width="3" height="3" fill="#333"/><rect x="3" y="12" width="2" height="1" fill="#000"/><rect x="7" y="12" width="2" height="1" fill="#000"/><rect x="11" y="12" width="2" height="1" fill="#000"/></svg>
<svg class="a" style="left:19px;top:63px" width="12" height="14"><defs><linearGradient id="gnf" x1="0" y1="0" x2="1" y2="1"><stop offset="0.45" stop-color="#fff"/><stop offset="1" stop-color="#b8c8e8"/></linearGradient></defs><path d="M0.5 0.5H8L10.5 3V13.5H0.5Z" fill="url(#gnf)" stroke="#8aa0cc"/><path d="M10.5 3V13.5H0.5" fill="none" stroke="#2c4468" stroke-width="1.2"/><path d="M8 0.5V3H10.5" fill="#fff" stroke="#2c4468"/></svg>
<svg class="a" style="left:41px;top:63px" width="17" height="14"><defs><linearGradient id="gof" x1="0" y1="0" x2="0" y2="1"><stop offset="0" stop-color="#fbe08a"/><stop offset="1" stop-color="#e8a420"/></linearGradient></defs><path d="M0.5 2.5H5L6.5 4H13.5V13.5H0.5Z" fill="#f6e7a4" stroke="#9a8450"/><path d="M4 6.5H16.5L13.5 13.5H0.5Z" fill="url(#gof)" stroke="#8a6a20"/><path d="M13.5 13.5L16.5 6.5" stroke="#222" stroke-width="1.2"/><rect x="9" y="0" width="3" height="2" fill="#4a6494"/><rect x="12" y="1" width="4" height="3" fill="#3e5890"/></svg>
<svg class="a" style="left:66px;top:63px" width="14" height="14" shape-rendering="crispEdges"><rect x="1" y="0" width="1" height="1" fill="#9a9af4"/><rect x="3" y="0" width="1" height="1" fill="#9a9af4"/><rect x="5" y="0" width="1" height="1" fill="#9a9af4"/><rect x="7" y="0" width="1" height="1" fill="#9a9af4"/><rect x="9" y="0" width="1" height="1" fill="#9a9af4"/><rect x="11" y="0" width="1" height="1" fill="#7070e0"/><rect x="13" y="0" width="1" height="1" fill="#7070e0"/><rect x="0" y="1" width="1" height="1" fill="#7070e0"/><rect x="2" y="1" width="1" height="1" fill="#7070e0"/><rect x="12" y="1" width="1" height="1" fill="#2a2a98"/><rect x="1" y="2" width="1" height="1" fill="#9a9af4"/><rect x="11" y="2" width="1" height="1" fill="#2a2a98"/><rect x="13" y="2" width="1" height="1" fill="#2a2a98"/><rect x="0" y="3" width="1" height="1" fill="#7070e0"/><rect x="2" y="3" width="1" height="1" fill="#7070e0"/><rect x="12" y="3" width="1" height="1" fill="#2a2a98"/><rect x="1" y="4" width="1" height="1" fill="#9a9af4"/><rect x="11" y="4" width="1" height="1" fill="#2a2a98"/><rect x="13" y="4" width="1" height="1" fill="#2a2a98"/><rect x="0" y="5" width="1" height="1" fill="#7070e0"/><rect x="2" y="5" width="1" height="1" fill="#7070e0"/><rect x="12" y="5" width="1" height="1" fill="#2a2a98"/><rect x="1" y="6" width="1" height="1" fill="#9a9af4"/><rect x="11" y="6" width="1" height="1" fill="#2a2a98"/><rect x="13" y="6" width="1" height="1" fill="#2a2a98"/><rect x="0" y="7" width="1" height="1" fill="#7070e0"/><rect x="2" y="7" width="1" height="1" fill="#7070e0"/><rect x="4" y="7" width="1" height="1" fill="#3448d0"/><rect x="6" y="7" width="1" height="1" fill="#3448d0"/><rect x="8" y="7" width="1" height="1" fill="#3448d0"/><rect x="10" y="7" width="1" height="1" fill="#3448d0"/><rect x="12" y="7" width="1" height="1" fill="#2a2a98"/><rect x="1" y="8" width="1" height="1" fill="#9a9af4"/><rect x="3" y="8" width="1" height="1" fill="#7070e0"/><rect x="5" y="8" width="1" height="1" fill="#7070e0"/><rect x="7" y="8" width="1" height="1" fill="#7070e0"/><rect x="9" y="8" width="1" height="1" fill="#7070e0"/><rect x="11" y="8" width="1" height="1" fill="#2a2a98"/><rect x="13" y="8" width="1" height="1" fill="#2a2a98"/><rect x="0" y="9" width="1" height="1" fill="#7070e0"/><rect x="2" y="9" width="1" height="1" fill="#7070e0"/><rect x="4" y="9" width="1" height="1" fill="#4a5058"/><rect x="6" y="9" width="1" height="1" fill="#4a5058"/><rect x="8" y="9" width="1" height="1" fill="#4a5058"/><rect x="10" y="9" width="1" height="1" fill="#7070e0"/><rect x="12" y="9" width="1" height="1" fill="#2a2a98"/><rect x="1" y="10" width="1" height="1" fill="#9a9af4"/><rect x="3" y="10" width="1" height="1" fill="#b0b0f8"/><rect x="9" y="10" width="1" height="1" fill="#507070"/><rect x="11" y="10" width="1" height="1" fill="#2a2a98"/><rect x="13" y="10" width="1" height="1" fill="#2a2a98"/><rect x="0" y="11" width="1" height="1" fill="#7070e0"/><rect x="2" y="11" width="1" height="1" fill="#7070e0"/><rect x="4" y="11" width="1" height="1" fill="#4a5058"/><rect x="6" y="11" width="1" height="1" fill="#5a7878"/><rect x="10" y="11" width="1" height="1" fill="#2a2a98"/><rect x="12" y="11" width="1" height="1" fill="#2a2a98"/><rect x="1" y="12" width="1" height="1" fill="#9a9af4"/><rect x="3" y="12" width="1" height="1" fill="#3448d0"/><rect x="9" y="12" width="1" height="1" fill="#4a5058"/><rect x="11" y="12" width="1" height="1" fill="#2a2a98"/><rect x="13" y="12" width="1" height="1" fill="#2a2a98"/><rect x="0" y="13" width="1" height="1" fill="#7070e0"/><rect x="2" y="13" width="1" height="1" fill="#7070e0"/><rect x="4" y="13" width="1" height="1" fill="#2a2a98"/><rect x="6" y="13" width="1" height="1" fill="#2a2a98"/><rect x="8" y="13" width="1" height="1" fill="#2a2a98"/><rect x="10" y="13" width="1" height="1" fill="#2a2a98"/><rect x="12" y="13" width="1" height="1" fill="#2a2a98"/><rect x="13" y="0" width="1" height="1" fill="#7070e0"/></svg>
<svg class="a" style="left:100px;top:63px" width="14" height="14"><defs><radialGradient id="grun" cx="0.4" cy="0.35" r="0.7"><stop offset="0" stop-color="#a8d890"/><stop offset="0.6" stop-color="#4c9c4c"/><stop offset="1" stop-color="#1e7a2e"/></radialGradient></defs><circle cx="7" cy="7" r="6.5" fill="url(#grun)" stroke="#218a33" stroke-width="1"/><path d="M4.3 2.2V11.8L11.2 7Z" fill="#fff"/><path d="M4.5 2L11 7" stroke="#7ee01c" stroke-width="1"/></svg>
<svg class="a" style="left:123px;top:62px" width="15" height="15" shape-rendering="crispEdges"><rect x="4" y="0" width="1" height="1" fill="#1d3c30"/><rect x="4" y="1" width="1" height="1" fill="#1d3c30"/><rect x="4" y="2" width="1" height="1" fill="#1d3c30"/><rect x="0" y="3" width="1" height="1" fill="#1d3c30"/><rect x="1" y="3" width="1" height="1" fill="#1d3c30"/><rect x="2" y="3" width="1" height="1" fill="#1d3c30"/><rect x="3" y="3" width="1" height="1" fill="#1d3c30"/><rect x="4" y="3" width="1" height="1" fill="#1d3c30"/><rect x="8" y="1" width="1" height="1" fill="#1d3c30"/><rect x="8" y="2" width="1" height="1" fill="#1d3c30"/><rect x="8" y="3" width="1" height="1" fill="#1d3c30"/><rect x="7" y="4" width="1" height="1" fill="#1d3c30"/><rect x="0" y="6" width="1" height="1" fill="#1d3c30"/><rect x="1" y="6" width="1" height="1" fill="#1d3c30"/><rect x="2" y="6" width="1" height="1" fill="#1d3c30"/><rect x="3" y="7" width="1" height="1" fill="#1d3c30"/><rect x="3" y="8" width="1" height="1" fill="#1d3c30"/><rect x="3" y="9" width="1" height="1" fill="#1d3c30"/><rect x="3" y="10" width="1" height="1" fill="#1d3c30"/><rect x="2" y="11" width="1" height="1" fill="#1d3c30"/><rect x="6" y="12" width="1" height="1" fill="#1d3c30"/><rect x="6" y="13" width="1" height="1" fill="#1d3c30"/><rect x="5" y="14" width="1" height="1" fill="#1d3c30"/><rect x="10" y="4" width="1" height="1" fill="#1d3c30"/><rect x="11" y="4" width="1" height="1" fill="#1d3c30"/><rect x="12" y="5" width="1" height="1" fill="#1d3c30"/><rect x="13" y="5" width="1" height="1" fill="#1d3c30"/><rect x="12" y="8" width="1" height="1" fill="#1d3c30"/><rect x="13" y="8" width="1" height="1" fill="#1d3c30"/><rect x="14" y="9" width="1" height="1" fill="#1d3c30"/></svg>
<svg class="a" style="left:122px;top:62px" width="17" height="16"><defs><linearGradient id="gbug" x1="0" y1="0" x2="1" y2="1"><stop offset="0" stop-color="#f0f8e0"/><stop offset="1" stop-color="#a8d080"/></linearGradient></defs><ellipse cx="9" cy="7.6" rx="3.3" ry="5" transform="rotate(-45 9 7.6)" fill="url(#gbug)" stroke="#12607a" stroke-width="1.2"/><path d="M8.5 7.5L11.5 10.5" stroke="#70b050" stroke-width="0.9"/><rect x="6" y="4.5" width="1.4" height="1.4" fill="#2a7a20"/></svg>
<svg class="a" style="left:158px;top:65px" width="15" height="11" shape-rendering="crispEdges"><rect x="3" y="0" width="1" height="1" fill="#b8860f"/><rect x="5" y="0" width="1" height="1" fill="#b8860f"/><rect x="7" y="0" width="1" height="1" fill="#b8860f"/><rect x="9" y="0" width="1" height="1" fill="#b8860f"/><rect x="2" y="1" width="1" height="1" fill="#b8860f"/><rect x="10" y="1" width="1" height="1" fill="#b8860f"/><rect x="1" y="2" width="1" height="1" fill="#b8860f"/><rect x="5" y="2" width="1" height="1" fill="#b8860f"/><rect x="7" y="2" width="1" height="1" fill="#b8860f"/><rect x="11" y="2" width="1" height="1" fill="#b8860f"/><rect x="0" y="3" width="1" height="1" fill="#b8860f"/><rect x="12" y="3" width="1" height="1" fill="#b8860f"/><rect x="0" y="5" width="1" height="1" fill="#b8860f"/><rect x="2" y="5" width="1" height="1" fill="#b8860f"/><rect x="8" y="5" width="1" height="1" fill="#b8860f"/><rect x="10" y="5" width="1" height="1" fill="#b8860f"/><rect x="12" y="5" width="1" height="1" fill="#b8860f"/><rect x="14" y="5" width="1" height="1" fill="#b8860f"/><rect x="1" y="6" width="1" height="1" fill="#b8860f"/><rect x="9" y="6" width="1" height="1" fill="#f4d47c"/><rect x="11" y="6" width="1" height="1" fill="#f4d47c"/><rect x="13" y="6" width="1" height="1" fill="#f4d47c"/><rect x="10" y="7" width="1" height="1" fill="#f4d47c"/><rect x="12" y="7" width="1" height="1" fill="#f4d47c"/><rect x="11" y="8" width="1" height="1" fill="#f4d47c"/><rect x="3" y="2" width="1" height="1" fill="#f4d47c"/><rect x="9" y="2" width="1" height="1" fill="#f4d47c"/><rect x="2" y="3" width="1" height="1" fill="#f4d47c"/><rect x="10" y="3" width="1" height="1" fill="#f4d47c"/><rect x="1" y="4" width="1" height="1" fill="#f4d47c"/><rect x="11" y="4" width="1" height="1" fill="#f4d47c"/><rect x="4" y="9" width="1" height="1" fill="#4a86c0"/><rect x="6" y="9" width="1" height="1" fill="#506888"/><rect x="5" y="10" width="1" height="1" fill="#2a3460"/><rect x="7" y="10" width="1" height="1" fill="#404c50"/></svg>
<svg class="a" style="left:182px;top:65px" width="15" height="11" shape-rendering="crispEdges"><rect x="1" y="0" width="1" height="1" fill="#b8860f"/><rect x="3" y="0" width="1" height="1" fill="#b8860f"/><rect x="5" y="0" width="1" height="1" fill="#b8860f"/><rect x="7" y="0" width="1" height="1" fill="#d4c08a"/><rect x="0" y="1" width="1" height="1" fill="#b8860f"/><rect x="8" y="1" width="1" height="1" fill="#d4c08a"/><rect x="1" y="2" width="1" height="1" fill="#b8860f"/><rect x="3" y="2" width="1" height="1" fill="#b8860f"/><rect x="5" y="2" width="1" height="1" fill="#b8860f"/><rect x="6" y="3" width="1" height="1" fill="#b8860f"/><rect x="8" y="3" width="1" height="1" fill="#b8860f"/><rect x="4" y="5" width="1" height="1" fill="#b8860f"/><rect x="6" y="5" width="1" height="1" fill="#b8860f"/><rect x="8" y="5" width="1" height="1" fill="#b8860f"/><rect x="10" y="5" width="1" height="1" fill="#b8860f"/><rect x="5" y="6" width="1" height="1" fill="#f4d47c"/><rect x="7" y="6" width="1" height="1" fill="#f4d47c"/><rect x="9" y="6" width="1" height="1" fill="#f4d47c"/><rect x="6" y="7" width="1" height="1" fill="#f4d47c"/><rect x="8" y="7" width="1" height="1" fill="#f4d47c"/><rect x="7" y="8" width="1" height="1" fill="#f4d47c"/><rect x="0" y="9" width="1" height="1" fill="#4a86c0"/><rect x="2" y="9" width="1" height="1" fill="#506888"/><rect x="12" y="9" width="1" height="1" fill="#506888"/><rect x="14" y="9" width="1" height="1" fill="#4a86c0"/><rect x="1" y="10" width="1" height="1" fill="#2a3460"/><rect x="3" y="10" width="1" height="1" fill="#404c50"/><rect x="11" y="10" width="1" height="1" fill="#404c50"/><rect x="13" y="10" width="1" height="1" fill="#2a3460"/></svg>
<svg class="a" style="left:205px;top:64px" width="15" height="11" shape-rendering="crispEdges"><rect x="1" y="0" width="1" height="1" fill="#2a3460"/><rect x="3" y="0" width="1" height="1" fill="#404c50"/><rect x="7" y="0" width="1" height="1" fill="#b8860f"/><rect x="11" y="0" width="1" height="1" fill="#404c50"/><rect x="13" y="0" width="1" height="1" fill="#2a3460"/><rect x="0" y="1" width="1" height="1" fill="#4a86c0"/><rect x="2" y="1" width="1" height="1" fill="#506888"/><rect x="6" y="1" width="1" height="1" fill="#b8860f"/><rect x="8" y="1" width="1" height="1" fill="#b8860f"/><rect x="12" y="1" width="1" height="1" fill="#506888"/><rect x="14" y="1" width="1" height="1" fill="#4a86c0"/><rect x="7" y="2" width="1" height="1" fill="#f4d47c"/><rect x="6" y="3" width="1" height="1" fill="#b8860f"/><rect x="8" y="3" width="1" height="1" fill="#b8860f"/><rect x="3" y="4" width="1" height="1" fill="#b8860f"/><rect x="7" y="4" width="1" height="1" fill="#f4d47c"/><rect x="2" y="5" width="1" height="1" fill="#b8860f"/><rect x="4" y="5" width="1" height="1" fill="#b8860f"/><rect x="6" y="5" width="1" height="1" fill="#b8860f"/><rect x="8" y="5" width="1" height="1" fill="#b8860f"/><rect x="1" y="6" width="1" height="1" fill="#b8860f"/><rect x="5" y="6" width="1" height="1" fill="#b8860f"/><rect x="0" y="7" width="1" height="1" fill="#b8860f"/><rect x="8" y="7" width="1" height="1" fill="#d4c08a"/><rect x="1" y="8" width="1" height="1" fill="#b8860f"/><rect x="5" y="8" width="1" height="1" fill="#b8860f"/><rect x="7" y="8" width="1" height="1" fill="#d4c08a"/><rect x="2" y="9" width="1" height="1" fill="#b8860f"/><rect x="4" y="9" width="1" height="1" fill="#b8860f"/><rect x="3" y="10" width="1" height="1" fill="#b8860f"/></svg>
<svg class="a" style="left:239px;top:62px" width="16" height="16"><defs><linearGradient id="gst" x1="0" y1="0" x2="0" y2="1"><stop offset="0" stop-color="#f09a80"/><stop offset="0.45" stop-color="#e04a3a"/><stop offset="1" stop-color="#d01a18"/></linearGradient></defs><path d="M4.7 0.5H11.3L15.5 4.7V11.3L11.3 15.5H4.7L0.5 11.3V4.7Z" fill="url(#gst)" stroke="#901010" stroke-width="1"/></svg>
<svg class="a" style="left:240px;top:68px" width="14" height="4" shape-rendering="crispEdges"><rect x="0" y="0" width="1" height="1" fill="#ffffff"/><rect x="1" y="0" width="1" height="1" fill="#ffffff"/><rect x="2" y="0" width="1" height="1" fill="#ffffff"/><rect x="0" y="1" width="1" height="1" fill="#ffffff"/><rect x="1" y="2" width="1" height="1" fill="#ffffff"/><rect x="2" y="2" width="1" height="1" fill="#ffffff"/><rect x="0" y="3" width="1" height="1" fill="#ffffff"/><rect x="1" y="3" width="1" height="1" fill="#ffffff"/><rect x="2" y="3" width="1" height="1" fill="#ffffff"/><rect x="3" y="0" width="1" height="1" fill="#ffffff"/><rect x="4" y="0" width="1" height="1" fill="#ffffff"/><rect x="5" y="0" width="1" height="1" fill="#ffffff"/><rect x="6" y="0" width="1" height="1" fill="#ffffff"/><rect x="4" y="1" width="1" height="1" fill="#ffffff"/><rect x="5" y="1" width="1" height="1" fill="#ffffff"/><rect x="4" y="2" width="1" height="1" fill="#ffffff"/><rect x="5" y="2" width="1" height="1" fill="#ffffff"/><rect x="4" y="3" width="1" height="1" fill="#ffffff"/><rect x="5" y="3" width="1" height="1" fill="#ffffff"/><rect x="7" y="0" width="1" height="1" fill="#ffffff"/><rect x="8" y="0" width="1" height="1" fill="#ffffff"/><rect x="9" y="0" width="1" height="1" fill="#ffffff"/><rect x="10" y="0" width="1" height="1" fill="#ffffff"/><rect x="7" y="1" width="1" height="1" fill="#ffffff"/><rect x="10" y="1" width="1" height="1" fill="#ffffff"/><rect x="7" y="2" width="1" height="1" fill="#ffffff"/><rect x="10" y="2" width="1" height="1" fill="#ffffff"/><rect x="7" y="3" width="1" height="1" fill="#ffffff"/><rect x="8" y="3" width="1" height="1" fill="#ffffff"/><rect x="9" y="3" width="1" height="1" fill="#ffffff"/><rect x="10" y="3" width="1" height="1" fill="#ffffff"/><rect x="11" y="0" width="1" height="1" fill="#ffffff"/><rect x="12" y="0" width="1" height="1" fill="#ffffff"/><rect x="13" y="0" width="1" height="1" fill="#ffffff"/><rect x="11" y="1" width="1" height="1" fill="#ffffff"/><rect x="13" y="1" width="1" height="1" fill="#ffffff"/><rect x="11" y="2" width="1" height="1" fill="#ffffff"/><rect x="12" y="2" width="1" height="1" fill="#ffffff"/><rect x="13" y="2" width="1" height="1" fill="#ffffff"/><rect x="11" y="3" width="1" height="1" fill="#ffffff"/></svg>
</body></html>
